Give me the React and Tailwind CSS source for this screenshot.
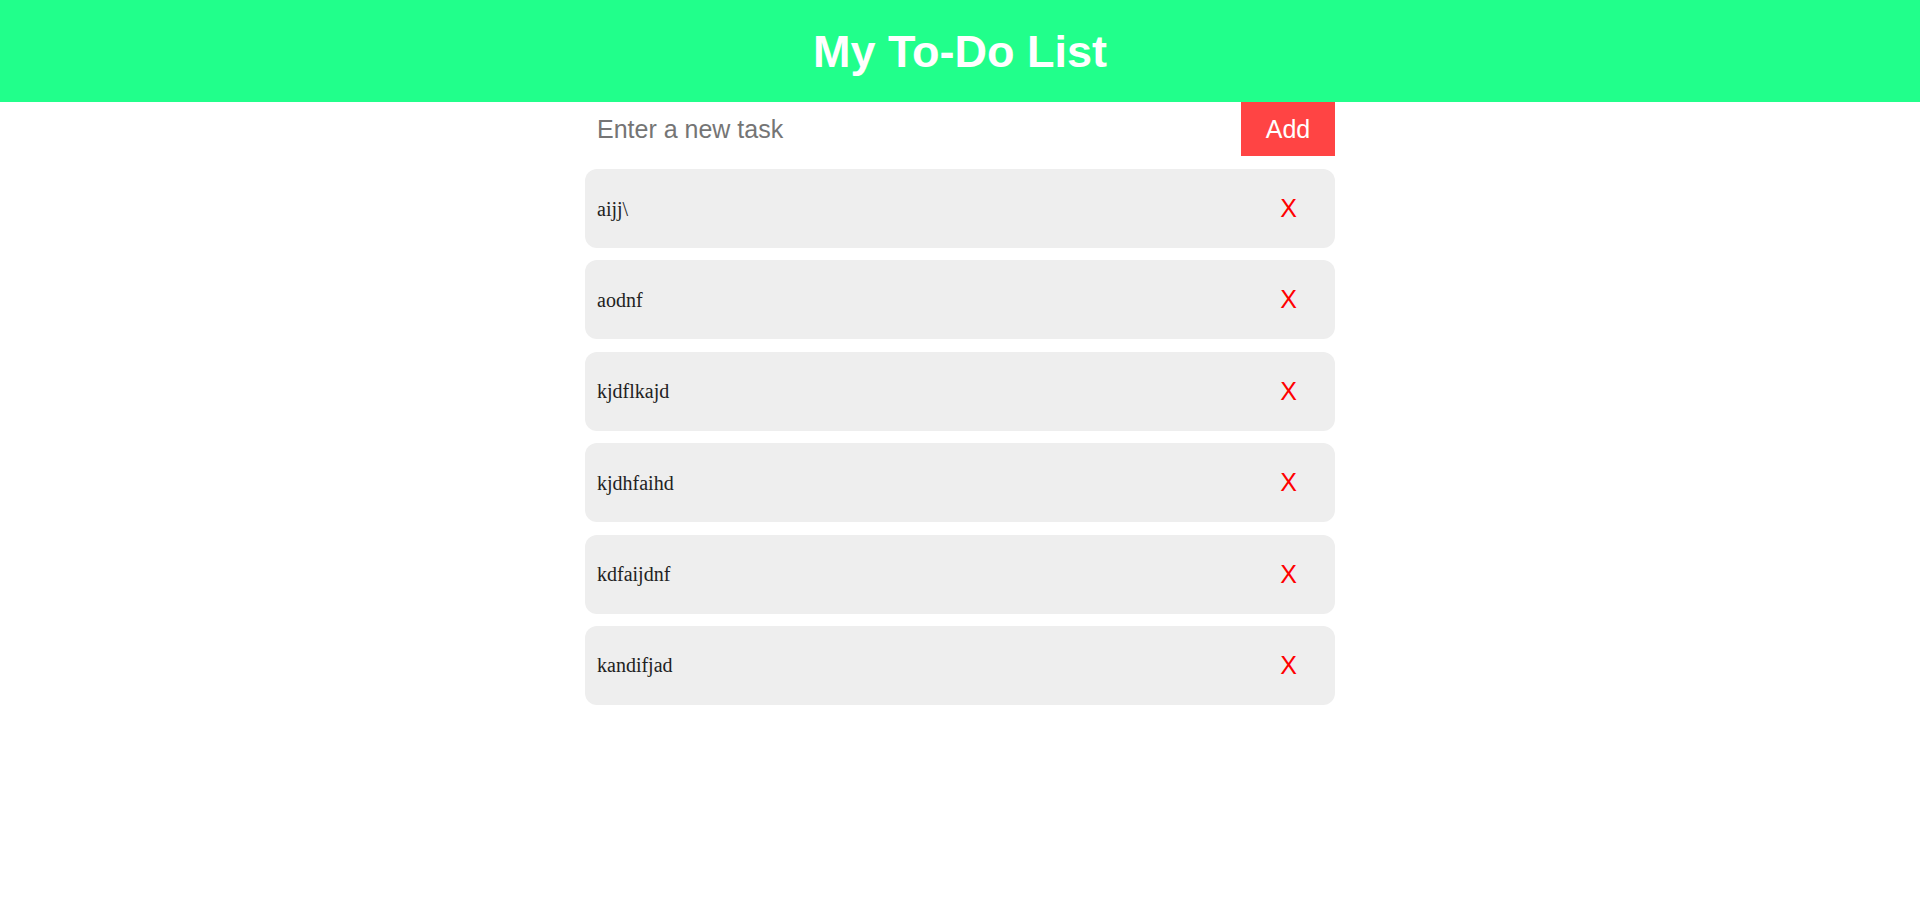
import { useState } from "react";

const initialTasks = ["aijj\\", "aodnf", "kjdflkajd", "kjdhfaihd", "kdfaijdnf", "kandifjad"];

export default function App() {
  const [tasks, setTasks] = useState(initialTasks);
  const [text, setText] = useState("");

  const addTask = (e) => {
    e.preventDefault();
    if (!text.trim()) return;
    setTasks((t) => [...t, text.trim()]);
    setText("");
  };

  const removeTask = (i) => setTasks((t) => t.filter((_, idx) => idx !== i));

  return (
    <div className="min-h-screen bg-white font-['Liberation_Sans',Arial,sans-serif]">
      <header className="h-[102px] bg-[#21ff8b] flex items-center justify-center">
        <h1 className="text-[45px] font-bold text-white leading-none">My To-Do List</h1>
      </header>

      <div className="w-[750px] mx-auto">
        <form onSubmit={addTask} className="flex h-[54px]">
          <input
            className="flex-1 min-w-0 px-3 pt-[2px] text-[25px] text-[#222] bg-white outline-none placeholder:text-[#757575]"
            placeholder="Enter a new task"
            value={text}
            onChange={(e) => setText(e.target.value)}
          />
          <button type="submit" className="w-[94px] pt-[2px] bg-[#ff4444] text-white text-[25px]">
            Add
          </button>
        </form>

        <ul className="mt-[13px] flex flex-col gap-[12.4px]">
          {tasks.map((t, i) => (
            <li
              key={i}
              className="h-[79px] rounded-[12px] bg-[#eeeeee] flex items-center justify-between pl-3 pr-[38px]"
            >
              <span className="font-['Liberation_Serif','Times_New_Roman',serif] text-[20px] text-[#222]">{t}</span>
              <button onClick={() => removeTask(i)} className="text-[25px] text-[#ff0000] leading-none">
                X
              </button>
            </li>
          ))}
        </ul>
      </div>
    </div>
  );
}
